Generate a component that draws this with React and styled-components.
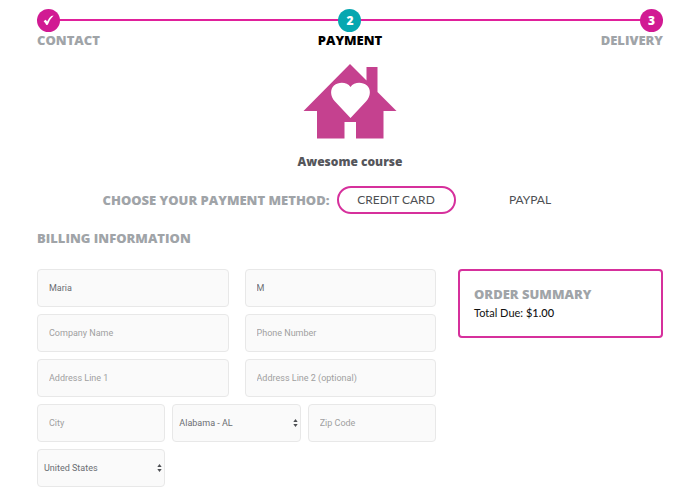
import React, { useState } from "react";
import styled, { createGlobalStyle } from "styled-components";

const GlobalStyle = createGlobalStyle`
  * {
    box-sizing: border-box;
  }
  body {
    margin: 0;
    background-color: white;
    color: #4d4f53;
    font-family: Lato, "Liberation Sans", sans-serif;
    font-size: 12px;
    line-height: 16px;
  }
`;

const Page = styled.main`
  padding: 9px 37px 10px;
`;

const Steps = styled.ol`
  position: relative;
  display: grid;
  grid-template-columns: repeat(3, 1fr);
  margin: 0;
  padding: 0;
  list-style: none;
  &::before {
    content: "";
    position: absolute;
    top: 10px;
    left: 0;
    right: 0;
    height: 2px;
    background-color: #e0209b;
  }
`;

const Step = styled.li`
  position: relative;
  display: flex;
  flex-direction: column;
  align-items: ${({ $align }) => $align};
  color: ${({ $active }) => ($active ? "#000000" : "#a0a4a8")};
  font-family: "Open Sans", Lato, sans-serif;
  font-size: 13px;
  font-weight: 800;
  text-transform: uppercase;
`;

const Circle = styled.span`
  display: flex;
  justify-content: center;
  align-items: center;
  width: 23px;
  height: 23px;
  border-radius: 50%;
  background-color: ${({ $active }) => ($active ? "#06a7b0" : "#d11a93")};
  color: white;
  font-size: 12px;
`;

const Course = styled.section`
  display: flex;
  flex-direction: column;
  align-items: center;
  margin-top: 16px;
`;

const House = styled.svg`
  width: 94px;
  height: 76px;
`;

const CourseName = styled.h1`
  margin: 14px 0 0;
  color: #55565b;
  font-family: "Open Sans", Lato, sans-serif;
  font-size: 12px;
  line-height: 16px;
  font-weight: 800;
`;

const Methods = styled.fieldset`
  display: flex;
  justify-content: center;
  align-items: center;
  margin: 16px 8px 0 0;
  padding: 0;
  border: none;
`;

const Title = styled.h2`
  margin: 0;
  color: #a0a4a8;
  font-family: "Open Sans", Lato, sans-serif;
  font-size: 13px;
  line-height: 16px;
  font-weight: 800;
  text-transform: uppercase;
`;

const MethodTitle = styled(Title)`
  margin-right: 7px;
`;

const Radio = styled.input`
  position: absolute;
  opacity: 0;
`;

const Method = styled.label`
  display: flex;
  justify-content: center;
  align-items: center;
  width: 119px;
  height: 28px;
  border: 2px solid transparent;
  border-radius: 14px;
  color: #4d4f53;
  text-transform: uppercase;
  cursor: pointer;
  &:has(:checked) {
    border-color: #d6309c;
  }
  & + & {
    margin-left: 15px;
  }
`;

const BillingTitle = styled(Title)`
  margin-top: 16px;
`;

const Content = styled.div`
  display: grid;
  grid-template-columns: 399fr 205fr;
  align-items: start;
  gap: 22px;
  margin-top: 23px;
`;

const Form = styled.form`
  display: grid;
  gap: 7px;
`;

const Row = styled.div`
  display: grid;
  grid-template-columns: repeat(${({ $cols }) => $cols}, 1fr);
  gap: ${({ $cols }) => ($cols === 2 ? 16 : 7)}px;
`;

const Input = styled.input`
  width: 100%;
  height: 38px;
  padding: 0 11px;
  border: 1px solid #e8e8e8;
  border-radius: 4px;
  background-color: #fafafa;
  color: #6b6e72;
  font-family: Roboto, "Liberation Sans", sans-serif;
  font-size: 9px;
  &::placeholder {
    color: #a0a0a0;
    opacity: 1;
  }
`;

const SelectBox = styled.div`
  position: relative;
`;

const Select = styled.select`
  display: block;
  width: 100%;
  height: 38px;
  padding: 0 14px 0 6px;
  border: 1px solid #e8e8e8;
  border-radius: 4px;
  background-color: #fafafa;
  color: #6b6e72;
  font-family: Roboto, "Liberation Sans", sans-serif;
  font-size: 9px;
  appearance: none;
`;

const Arrows = styled.svg`
  position: absolute;
  top: 15px;
  right: 3px;
  width: 5px;
  height: 8px;
  pointer-events: none;
`;

const Summary = styled.aside`
  padding: 15px 14px;
  border: 2px solid #d6309c;
  border-radius: 4px;
`;

const Total = styled.p`
  margin: 3px 0 0;
  color: #111111;
  font-size: 11px;
  line-height: 16px;
`;

const Price = styled.span`
  font-weight: 500;
`;

const SelectField = ({ label, options }) => (
  <SelectBox>
    <Select aria-label={label}>
      {options.map((option) => (
        <option key={option}>{option}</option>
      ))}
    </Select>
    <Arrows viewBox="0 0 5 8" fill="#4d4f53" aria-hidden="true">
      <path d="M2.5 0L4.7 3H.3zM2.5 8L4.7 5H.3z" />
    </Arrows>
  </SelectBox>
);

const Field = ({ label, value }) => (
  <Input type="text" aria-label={label} placeholder={label} defaultValue={value} />
);

const App = () => {
  const [method, setMethod] = useState("Credit card");
  return (
    <>
      <GlobalStyle />
      <Page>
        <Steps>
          <Step $align="flex-start">
            <Circle>
              <svg width="11" height="11" viewBox="0 0 11 11" fill="white">
                <path d="M.6 6.3L2.5 4.7Q3.5 5.4 4.1 6.6Q5.8 2.8 8.2.9L10.6.4Q6.8 4 4.8 9.7L3.3 10Q2.3 7.8.6 6.3z" />
              </svg>
            </Circle>
            Contact
          </Step>
          <Step $align="center" $active>
            <Circle $active>2</Circle>
            Payment
          </Step>
          <Step $align="flex-end">
            <Circle>3</Circle>
            Delivery
          </Step>
        </Steps>

        <Course>
          <House viewBox="0 0 94 76" aria-hidden="true">
            <path
              fill="#c5418f"
              d="M47 0L63.500 16.500V3H74.500V28L93.500 47H80.500V74.500H53V58H41.500V74.500H14V47H.5z"
            />
            <path
              fill="white"
              d="M47.500 54L32 37.500C27 32 27 25 31 21.500C36 17.500 44 18 47.500 23C51 18 59 17.500 64 21.500C68 25 68 32 63 37.500z"
            />
          </House>
          <CourseName>Awesome course</CourseName>
        </Course>

        <Methods>
          <MethodTitle>Choose your payment method:</MethodTitle>
          {["Credit card", "PayPal"].map((name) => (
            <Method key={name}>
              <Radio
                type="radio"
                name="method"
                checked={method === name}
                onChange={() => setMethod(name)}
              />
              {name}
            </Method>
          ))}
        </Methods>

        <BillingTitle>Billing information</BillingTitle>

        <Content>
          <Form>
            <Row $cols={2}>
              <Field label="First Name" value="Maria" />
              <Field label="Last Name" value="M" />
            </Row>
            <Row $cols={2}>
              <Field label="Company Name" />
              <Field label="Phone Number" />
            </Row>
            <Row $cols={2}>
              <Field label="Address Line 1" />
              <Field label="Address Line 2 (optional)" />
            </Row>
            <Row $cols={3}>
              <Field label="City" />
              <SelectField label="State" options={["Alabama - AL"]} />
              <Field label="Zip Code" />
            </Row>
            <Row $cols={3}>
              <SelectField label="Country" options={["United States"]} />
            </Row>
          </Form>

          <Summary>
            <Title>Order summary</Title>
            <Total>
              Total Due: <Price>$1.00</Price>
            </Total>
          </Summary>
        </Content>
      </Page>
    </>
  );
};

export default App;
